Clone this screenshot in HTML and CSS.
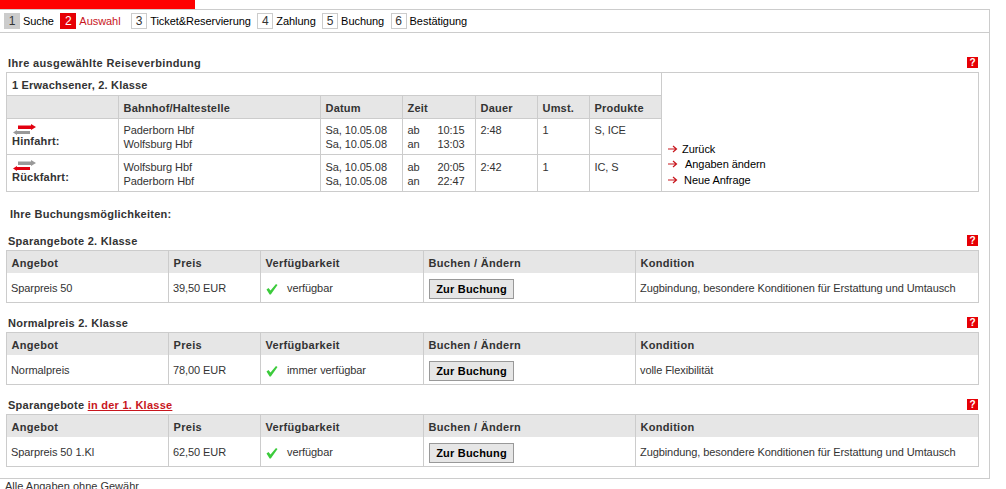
FILE: index.html
```html
<!DOCTYPE html>
<html lang="de">

<head>
    <meta charset="UTF-8">
    <title>Auswahl</title>
    <link rel="stylesheet" href="styles.css">
</head>

<body>
    <svg class="defs" width="0" height="0">
        <symbol id="arrow" viewBox="0 0 10 8">
            <path d="M0 4H8M5 1L8.5 4L5 7" fill="none" stroke="#c8161d" stroke-width="1.2" />
        </symbol>
        <symbol id="check" viewBox="0 0 12 12">
            <path d="M0.5 6.5L2.5 5L4.5 7.5L10 1L11.5 2L4.8 11.5H3.6Z" fill="#3ccb3c" />
        </symbol>
    </svg>
    <div class="top-bar"></div>
    <div class="page">
        <div class="steps">
            <span class="step-num done">1</span><span class="step-label">Suche</span>
            <span class="step-num active">2</span><span class="step-label active">Auswahl</span>
            <span class="step-num">3</span><span class="step-label">Ticket&amp;Reservierung</span>
            <span class="step-num">4</span><span class="step-label">Zahlung</span>
            <span class="step-num">5</span><span class="step-label">Buchung</span>
            <span class="step-num">6</span><span class="step-label">Bestätigung</span>
        </div>

        <div class="content">
            <div class="section-head first">
                <h2>Ihre ausgewählte Reiseverbindung</h2>
                <a class="help">?</a>
            </div>
            <div class="journey">
                <table class="journey-table">
                    <colgroup>
                        <col class="c-dir">
                        <col class="c-station">
                        <col class="c-date">
                        <col class="c-time">
                        <col class="c-dur">
                        <col class="c-chg">
                        <col>
                    </colgroup>
                    <tr>
                        <td colspan="7" class="journey-title">1 Erwachsener, 2. Klasse</td>
                    </tr>
                    <tr class="head">
                        <th></th>
                        <th>Bahnhof/Haltestelle</th>
                        <th>Datum</th>
                        <th>Zeit</th>
                        <th>Dauer</th>
                        <th>Umst.</th>
                        <th>Produkte</th>
                    </tr>
                    <tr class="trip">
                        <td class="dir">
                            <svg class="train" width="23" height="11" viewBox="0 0 23 11">
                                <path d="M0 8.5L4 6V7H17V10H4V11Z" fill="#999" />
                                <path d="M5 1.5H18V0L23 3L18 6V5H5Z" fill="#e2000f" />
                            </svg>
                            <b>Hinfahrt:</b>
                        </td>
                        <td>Paderborn Hbf<br>Wolfsburg Hbf</td>
                        <td>Sa, 10.05.08<br>Sa, 10.05.08</td>
                        <td><span class="ab">ab</span>10:15<br><span class="ab">an</span>13:03</td>
                        <td>2:48</td>
                        <td>1</td>
                        <td>S, ICE</td>
                    </tr>
                    <tr class="trip">
                        <td class="dir">
                            <svg class="train" width="23" height="11" viewBox="0 0 23 11">
                                <path d="M5 1.5H18V0L23 3L18 6V5H5Z" fill="#999" />
                                <path d="M0 8.5L4 6V7H17V10H4V11Z" fill="#e2000f" />
                            </svg>
                            <b>Rückfahrt:</b>
                        </td>
                        <td>Wolfsburg Hbf<br>Paderborn Hbf</td>
                        <td>Sa, 10.05.08<br>Sa, 10.05.08</td>
                        <td><span class="ab">ab</span>20:05<br><span class="ab">an</span>22:47</td>
                        <td>2:42</td>
                        <td>1</td>
                        <td>IC, S</td>
                    </tr>
                </table>
                <div class="journey-links">
                    <a class="link-zurueck"><svg width="10" height="8"><use href="#arrow" /></svg>Zurück</a>
                    <a class="link-aendern"><svg width="10" height="8"><use href="#arrow" /></svg>Angaben ändern</a>
                    <a class="link-neu"><svg width="10" height="8"><use href="#arrow" /></svg>Neue Anfrage</a>
                </div>
            </div>

            <h2 class="options-title">Ihre Buchungsmöglichkeiten:</h2>

            <div class="section-head">
                <h2>Sparangebote 2. Klasse</h2>
                <a class="help">?</a>
            </div>
            <table class="offers">
                <colgroup>
                    <col class="c-offer">
                    <col class="c-price">
                    <col class="c-avail">
                    <col class="c-book">
                    <col>
                </colgroup>
                <tr class="head">
                    <th>Angebot</th>
                    <th>Preis</th>
                    <th>Verfügbarkeit</th>
                    <th>Buchen / Ändern</th>
                    <th>Kondition</th>
                </tr>
                <tr>
                    <td>Sparpreis 50</td>
                    <td>39,50 EUR</td>
                    <td class="avail"><svg class="check" width="12" height="12"><use href="#check" /></svg>verfügbar</td>
                    <td><button class="book-btn">Zur Buchung</button></td>
                    <td>Zugbindung, besondere Konditionen für Erstattung und Umtausch</td>
                </tr>
            </table>

            <div class="section-head">
                <h2>Normalpreis 2. Klasse</h2>
                <a class="help">?</a>
            </div>
            <table class="offers">
                <colgroup>
                    <col class="c-offer">
                    <col class="c-price">
                    <col class="c-avail">
                    <col class="c-book">
                    <col>
                </colgroup>
                <tr class="head">
                    <th>Angebot</th>
                    <th>Preis</th>
                    <th>Verfügbarkeit</th>
                    <th>Buchen / Ändern</th>
                    <th>Kondition</th>
                </tr>
                <tr>
                    <td>Normalpreis</td>
                    <td>78,00 EUR</td>
                    <td class="avail"><svg class="check" width="12" height="12"><use href="#check" /></svg>immer verfügbar</td>
                    <td><button class="book-btn">Zur Buchung</button></td>
                    <td>volle Flexibilität</td>
                </tr>
            </table>

            <div class="section-head">
                <h2>Sparangebote <a class="red-link">in der 1. Klasse</a></h2>
                <a class="help">?</a>
            </div>
            <table class="offers">
                <colgroup>
                    <col class="c-offer">
                    <col class="c-price">
                    <col class="c-avail">
                    <col class="c-book">
                    <col>
                </colgroup>
                <tr class="head">
                    <th>Angebot</th>
                    <th>Preis</th>
                    <th>Verfügbarkeit</th>
                    <th>Buchen / Ändern</th>
                    <th>Kondition</th>
                </tr>
                <tr>
                    <td>Sparpreis 50 1.Kl</td>
                    <td>62,50 EUR</td>
                    <td class="avail"><svg class="check" width="12" height="12"><use href="#check" /></svg>verfügbar</td>
                    <td><button class="book-btn">Zur Buchung</button></td>
                    <td>Zugbindung, besondere Konditionen für Erstattung und Umtausch</td>
                </tr>
            </table>
        </div>
    </div>
    <p class="footnote">Alle Angaben ohne Gewähr</p>
</body>

</html>
```

FILE: styles.css
```css
html,
body {
    height: 489px;
    overflow: hidden;
}

body {
    margin: 0;
    font-family: "Liberation Sans", Arial, sans-serif;
    font-size: 11px;
    color: #333;
    background-color: #fff;
}

.defs {
    position: absolute;
}

.top-bar {
    width: 195px;
    height: 9px;
    background-color: #f00;
}

.page {
    box-sizing: border-box;
    width: 990px;
    height: 470px;
    border-top: 1px solid #ccc;
    border-right: 1px solid #ccc;
    border-bottom: 1px solid #ccc;
}

.steps {
    display: flex;
    align-items: center;
    box-sizing: border-box;
    height: 23px;
    padding-left: 4px;
    border-bottom: 1px solid #ccc;
    color: #000;
}

.step-num {
    box-sizing: border-box;
    width: 16px;
    height: 16px;
    line-height: 14px;
    text-align: center;
    border: 1px solid #ccc;
    font-size: 12px;
    color: #333;
}

.step-num.done {
    background-color: #ccc;
}

.step-num.active {
    background-color: #e60005;
    border-color: #e60005;
    color: #fff;
}

.step-label {
    margin: 0 6.4px 0 3px;
    letter-spacing: -0.05px;
}

.step-label.active {
    margin-right: 10.6px;
    color: #c8161d;
}

.content {
    padding: 0 10px 0 6px;
}

.section-head {
    display: flex;
    justify-content: space-between;
    align-items: center;
    height: 16px;
    padding: 0 0 1px 2px;
    margin-top: 12px;
}

.section-head.first {
    margin-top: 22px;
}

h2 {
    margin: 0;
    font-size: 11px;
    font-weight: bold;
    letter-spacing: 0.25px;
}

.first h2 {
    letter-spacing: 0.36px;
}

.help {
    align-self: flex-start;
    width: 11px;
    height: 11px;
    margin: 2px 1px 0 0;
    line-height: 11px;
    text-align: center;
    background-color: #e60005;
    color: #fff;
    font-size: 10px;
    font-weight: bold;
}

.red-link {
    color: #c8161d;
    text-decoration: underline;
}

.journey {
    display: flex;
    border: 1px solid #ccc;
}

table {
    border-collapse: collapse;
    table-layout: fixed;
}

.journey-table {
    width: 655px;
    height: 118px;
    border-right: 1px solid #ccc;
    letter-spacing: -0.08px;
}

.c-dir {
    width: 111px;
}

.c-station {
    width: 202px;
}

.c-date {
    width: 82px;
}

.c-time {
    width: 73px;
}

.c-dur {
    width: 62px;
}

.c-chg {
    width: 52px;
}

th {
    padding: 2px 5px 0;
    height: 20px;
    background-color: #e6e6e6;
    text-align: left;
    font-weight: bold;
    letter-spacing: 0.3px;
    border-left: 1px solid #ccc;
}

.journey-table th {
    letter-spacing: 0.2px;
}

th:first-child {
    border-left: none;
}

.head {
    border-top: 1px solid #ccc;
}

td {
    padding: 0 5px;
    border-left: 1px solid #ccc;
}

td:first-child {
    border-left: none;
}

.journey-table .journey-title {
    height: 20px;
    padding: 2px 5px 0;
    font-weight: bold;
    letter-spacing: 0.2px;
}

.trip {
    height: 36px;
    line-height: 14px;
    border-top: 1px solid #ccc;
}

.trip td {
    vertical-align: top;
    padding-top: 5px;
}

.head + .trip td {
    padding-top: 4px;
}

.trip .dir,
.head + .trip .dir {
    padding-top: 3px;
    line-height: 13px;
}

.train {
    display: block;
    margin: 2px 0 0 1px;
}

.dir b {
    letter-spacing: 0.2px;
}

.ab {
    display: inline-block;
    width: 30px;
}

.journey-links {
    flex: 1;
    display: flex;
    flex-direction: column;
    justify-content: flex-end;
    padding: 0 0 3px 6px;
    line-height: 15.5px;
    color: #000;
    letter-spacing: -0.05px;
}

.journey-links svg {
    margin-right: 4px;
}

.link-aendern svg {
    margin-right: 7px;
}

.link-neu svg {
    margin-right: 6px;
}

.options-title {
    margin: 16px 0 0 4px;
    line-height: 13px;
}

.options-title + .section-head {
    margin-top: 12px;
}

.offers {
    width: 973px;
    border: 1px solid #ccc;
}

.offers td {
    height: 29.5px;
    box-sizing: border-box;
    padding: 1.5px 5px 0 4px;
    vertical-align: middle;
    letter-spacing: -0.08px;
}

.offers .avail {
    padding-top: 2.5px;
}

.offers th {
    padding-left: 4.5px;
}

.c-offer {
    width: 162px;
}

.c-price {
    width: 92px;
}

.c-avail {
    width: 163px;
}

.c-book {
    width: 212px;
}

.check {
    vertical-align: -3px;
    margin: 0 9px 0 1px;
}

.book-btn {
    display: block;
    box-sizing: border-box;
    width: 85px;
    height: 20px;
    margin: 1.5px 0 0 1px;
    padding: 0;
    border: 1px solid #999;
    background-color: #e6e6e6;
    font-family: "Liberation Sans", Arial, sans-serif;
    font-size: 11px;
    font-weight: bold;
    letter-spacing: 0.2px;
    color: #000;
}

.footnote {
    margin: 1px 0 0 5px;
    line-height: 13px;
}
```
